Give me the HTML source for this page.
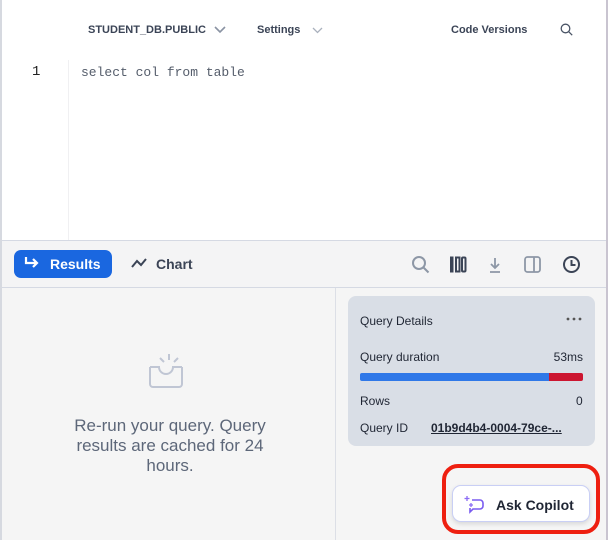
<!DOCTYPE html>
<html><head><style>
body{margin:0;width:608px;height:540px;overflow:hidden;font-family:"Liberation Sans",sans-serif;background:#fff;position:relative}
.a{position:absolute}
.top{color:#3b4456;font-size:11px;font-weight:bold}
</style></head><body>
<div class="a" style="left:0;top:0;width:2px;height:540px;background:#d6d9e0"></div>
<div class="a" style="left:606px;top:0;width:2px;height:540px;background:#c9c4d0"></div>
<div class="a top" style="left:88px;top:24px">STUDENT_DB.PUBLIC</div>
<svg class="a" style="left:214px;top:26px" width="12" height="8"><path d="M1 1l5 5 5-5" stroke="#8a93a3" stroke-width="1.6" fill="none"/></svg>
<div class="a top" style="left:257px;top:24px">Settings</div>
<svg class="a" style="left:312px;top:27px" width="11" height="7"><path d="M1 1l4.5 4.5 4.5-4.5" stroke="#aab1bd" stroke-width="1.3" fill="none"/></svg>
<div class="a top" style="left:451px;top:24px">Code Versions</div>
<svg class="a" style="left:560px;top:23px" width="14" height="14"><circle cx="5.5" cy="5.5" r="4.3" stroke="#4a5466" stroke-width="1.3" fill="none"/><path d="M8.7 8.7l3.5 3.5" stroke="#4a5466" stroke-width="1.3"/></svg>
<div class="a" style="left:32px;top:64px;font:14px 'Liberation Mono',monospace;color:#222">1</div>
<div class="a" style="left:68px;top:60px;width:1px;height:180px;background:#f0f0f2"></div>
<div class="a" style="left:81px;top:65px;font:13px 'Liberation Mono',monospace;color:#555d6b">select col from table</div>
<div class="a" style="left:2px;top:240px;width:604px;height:48px;background:#f4f4f5;border-top:1px solid #d5d9e3;border-bottom:1px solid #d5d9e3;box-sizing:border-box"></div>
<div class="a" style="left:14px;top:250px;width:98px;height:28px;background:#1a67e0;border-radius:7px"></div>
<svg class="a" style="left:22px;top:255px" width="20" height="16"><path d="M4 2v6h11M11 4l4 4-4 4" stroke="#fff" stroke-width="2.2" fill="none"/></svg>
<div class="a" style="left:50px;top:256px;color:#fff;font-size:14px;font-weight:bold">Results</div>
<svg class="a" style="left:130px;top:256px" width="18" height="14"><path d="M2 11l5-6 4 4 5-6" stroke="#3b4456" stroke-width="2" fill="none"/></svg>
<div class="a" style="left:156px;top:256px;color:#3b4456;font-size:14px;font-weight:bold">Chart</div>
<svg class="a" style="left:410px;top:254px" width="22" height="22"><circle cx="9" cy="9" r="6" stroke="#8d97a6" stroke-width="2" fill="none"/><path d="M13.5 13.5l5 5" stroke="#8d97a6" stroke-width="2"/></svg>
<svg class="a" style="left:448px;top:255px" width="20" height="20"><rect x="2" y="1.5" width="3.5" height="16" fill="#3b4456"/><rect x="8" y="2.5" width="3.5" height="14" stroke="#3b4456" stroke-width="2" fill="none"/><rect x="14" y="2.5" width="3.5" height="14" rx="1" stroke="#3b4456" stroke-width="2" fill="none"/></svg>
<svg class="a" style="left:486px;top:255px" width="18" height="20"><path d="M9 3v10M5 9l4 4 4-4M4 17h10" stroke="#8d97a6" stroke-width="1.8" fill="none"/></svg>
<svg class="a" style="left:523px;top:255px" width="20" height="20"><rect x="2" y="2" width="15" height="15" rx="2.5" stroke="#8d97a6" stroke-width="1.8" fill="none"/><path d="M11 2v15" stroke="#8d97a6" stroke-width="1.8"/></svg>
<svg class="a" style="left:561px;top:254px" width="21" height="21"><circle cx="10.5" cy="10.5" r="7.5" stroke="#3b4456" stroke-width="2" fill="none"/><path d="M10.5 6v5h4" stroke="#3b4456" stroke-width="2" fill="none"/></svg>
<div class="a" style="left:2px;top:288px;width:604px;height:252px;background:#f5f5f5"></div>
<div class="a" style="left:335px;top:288px;width:1px;height:252px;background:#dcdfe6"></div>
<svg class="a" style="left:146px;top:352px" width="46" height="44"><path d="M18 10l-4-4M23 8V2M28 10l4-4" stroke="#c0c6d4" stroke-width="2"/><path d="M4 15v17a3 3 0 0 0 3 3h26a3 3 0 0 0 3-3V15M4 15h9a7 7 0 0 0 14 0h9" stroke="#c0c6d4" stroke-width="2" fill="none"/></svg>
<div class="a" style="left:63px;top:416px;width:214px;text-align:center;color:#5d6779;font-size:17px;line-height:20px">Re-run your query. Query results are cached for 24 hours.</div>
<div class="a" style="left:348px;top:296px;width:247px;height:150px;background:#d9dee6;border-radius:8px"></div>
<div class="a" style="left:360px;top:314px;font-size:12px;color:#1f2533">Query Details</div>
<svg class="a" style="left:566px;top:317px" width="16" height="4"><circle cx="2" cy="2" r="1.4" fill="#555"/><circle cx="8" cy="2" r="1.4" fill="#555"/><circle cx="14" cy="2" r="1.4" fill="#555"/></svg>
<div class="a" style="left:360px;top:350px;font-size:12px;color:#1f2533">Query duration</div>
<div class="a" style="left:583px;top:350px;font-size:12px;color:#1f2533;transform:translateX(-100%)">53ms</div>
<div class="a" style="left:360px;top:373px;width:189px;height:8px;background:#2f78e8;border-radius:2px 0 0 2px"></div>
<div class="a" style="left:549px;top:373px;width:34px;height:8px;background:#cc1530;border-radius:0 2px 2px 0"></div>
<div class="a" style="left:360px;top:394px;font-size:12px;color:#1f2533">Rows</div>
<div class="a" style="left:576px;top:394px;font-size:12px;color:#1f2533">0</div>
<div class="a" style="left:360px;top:421px;font-size:12px;color:#1f2533">Query ID</div>
<div class="a" style="left:431px;top:421px;font-size:12px;color:#1f2533;text-decoration:underline;font-weight:bold">01b9d4b4-0004-79ce-...</div>
<div class="a" style="left:442px;top:464px;width:158px;height:70px;border:4px solid #ee1f10;border-radius:16px;box-sizing:border-box"></div>
<div class="a" style="left:452px;top:485px;width:138px;height:37px;background:#fff;border:1px solid #c9cff5;border-radius:9px;box-sizing:border-box;box-shadow:0 2px 5px rgba(0,0,0,.12)"></div>
<svg class="a" style="left:463px;top:495px" width="22" height="20"><path d="M9 5h8a3 3 0 0 1 3 3v3a3 3 0 0 1-3 3h-7l-3 3v-4" stroke="#7a5cf0" stroke-width="1.6" fill="none"/><path d="M4 1v5M1.5 3.5h5M8 8v4M6 10h4" stroke="#8c6cf5" stroke-width="1.3"/></svg>
<div class="a" style="left:496px;top:497px;font-size:14px;font-weight:bold;color:#1f2533">Ask Copilot</div>
</body></html>
